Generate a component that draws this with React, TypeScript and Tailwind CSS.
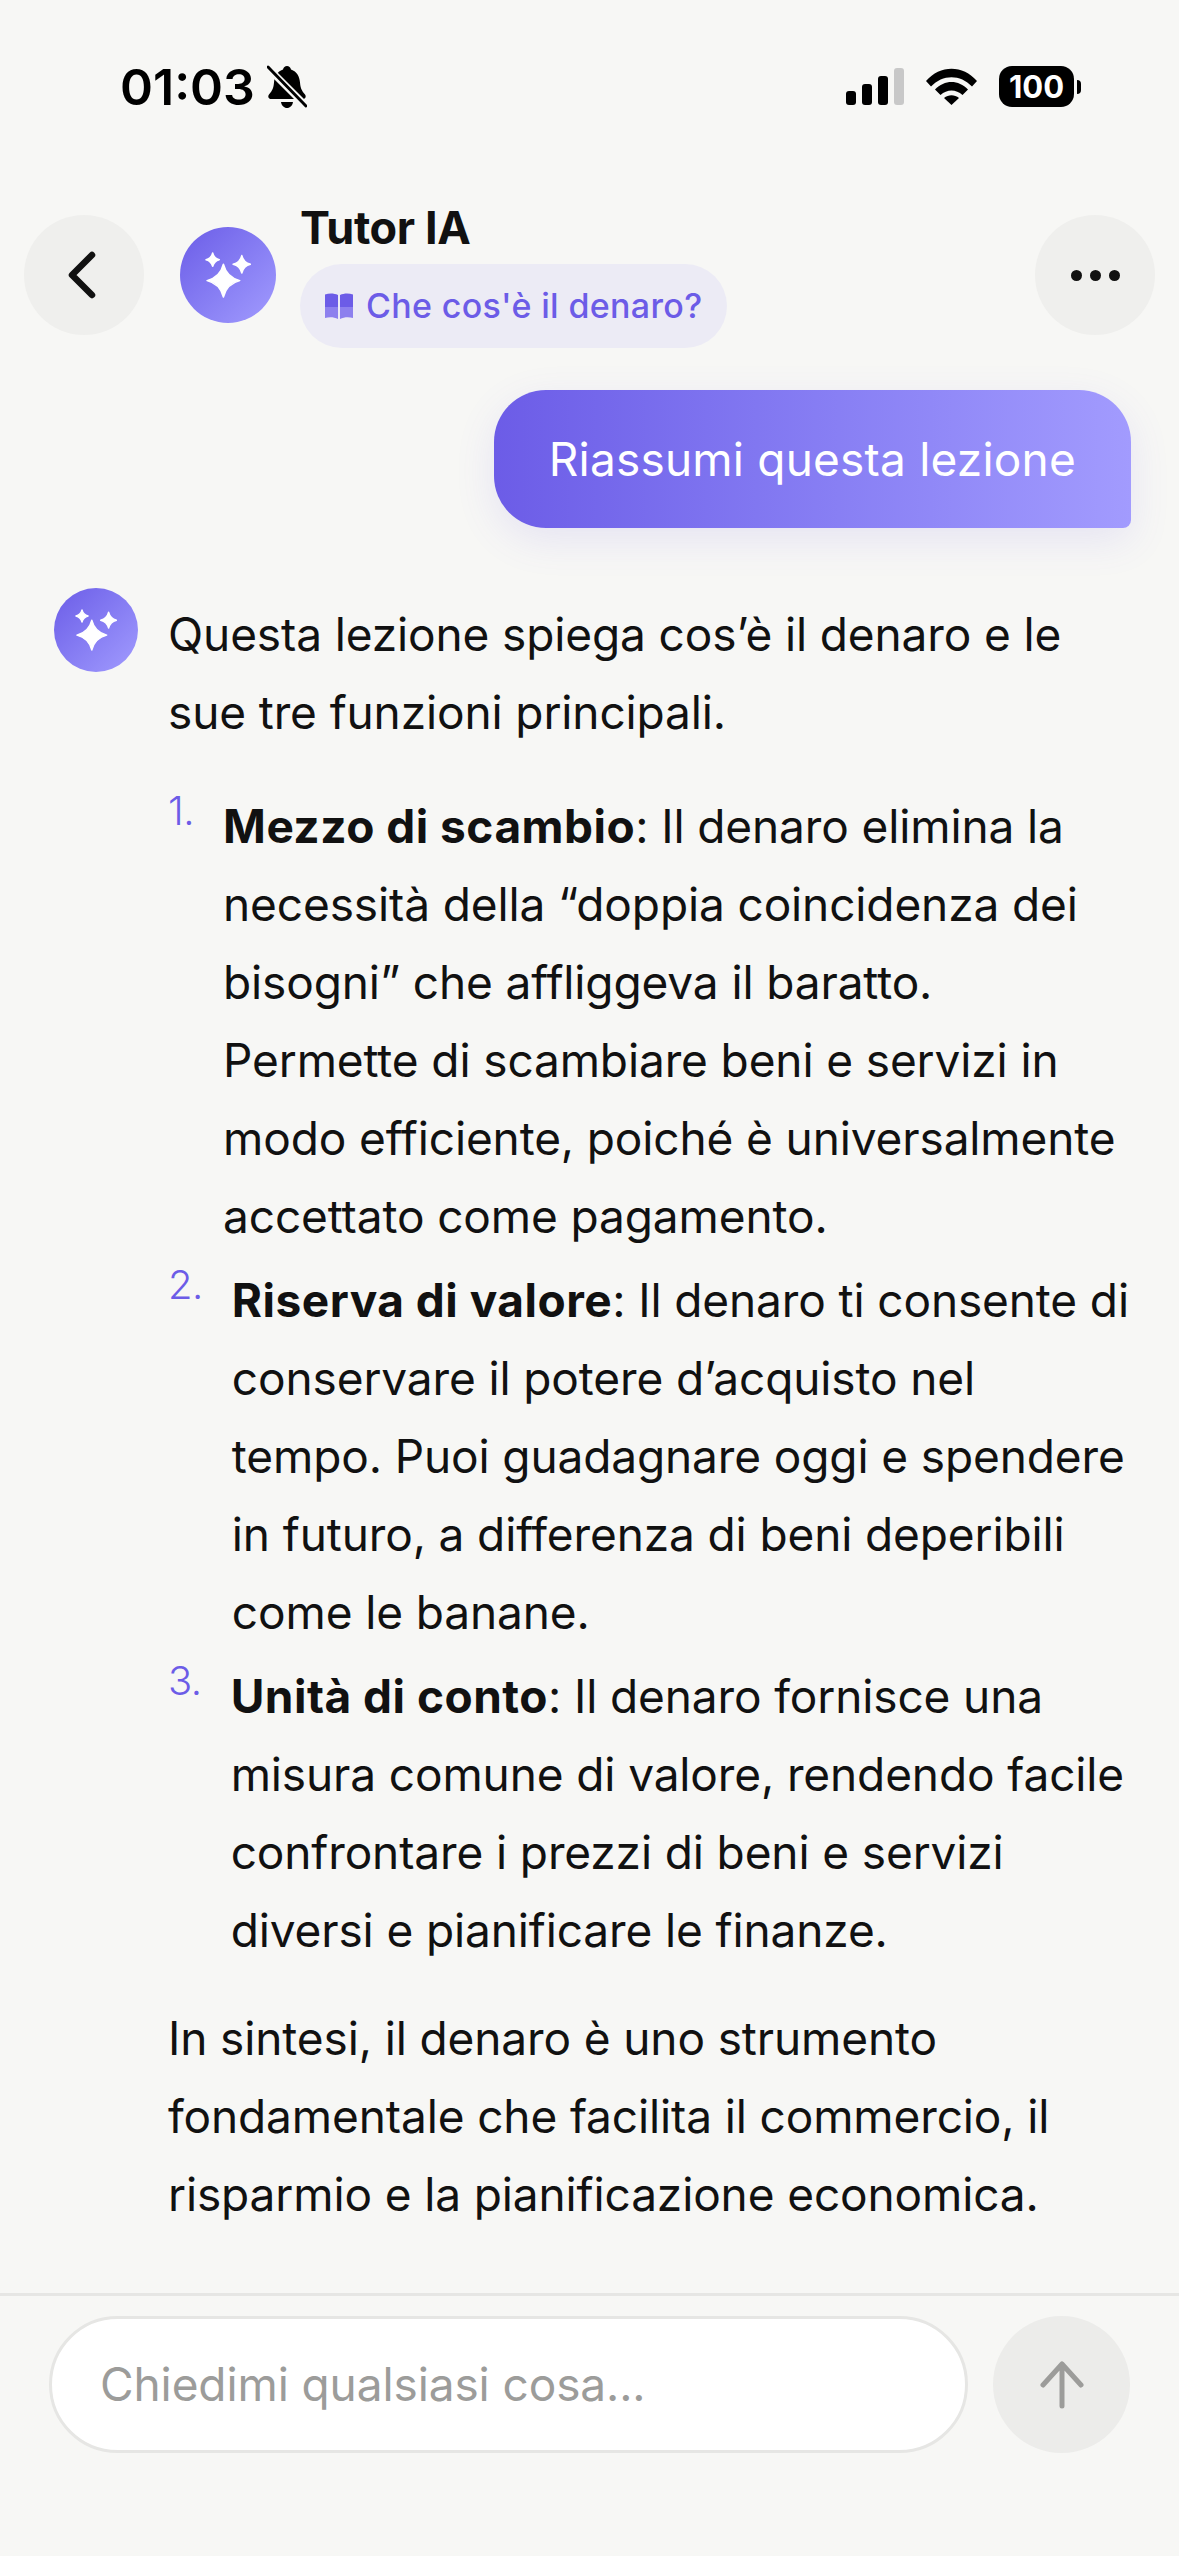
import React from 'react';

// four-point star with slightly rounded tips
const star = (cx: number, cy: number, r: number) => {
  const k = r * 0.2;
  return `M${cx} ${cy - r}Q${cx + k} ${cy - k} ${cx + r} ${cy}Q${cx + k} ${cy + k} ${cx} ${cy + r}Q${cx - k} ${cy + k} ${cx - r} ${cy}Q${cx - k} ${cy - k} ${cx} ${cy - r}Z`;
};

const Sparkles = ({ size }: { size: number }) => (
  <svg width={size} height={size} viewBox="0 0 45 45" fill="#fff" stroke="#fff" strokeWidth="1.5" strokeLinejoin="round">
    <path d={star(18, 28, 16)} />
    <path d={star(36, 12, 8.5)} />
    <path d={star(7.5, 7.5, 6.5)} />
  </svg>
);

const StatusBar = () => (
  <div className="flex justify-between pl-[120px] pr-[98px] pt-[62px] h-[202px] items-start">
    <div className="flex items-center gap-[12px]">
      <span className="text-[50px] leading-[50px] font-semibold text-black">01:03</span>
      <svg width="40" height="44" viewBox="0 0 40 44">
        <path d="M20 1c2 0 3.500 1.500 4 3.500 6 2 8.500 7 9 13 .4 5 1.500 8 5 12 1.500 2 .5 4.500-2 4.500H4c-2.500 0-3.500-2.500-2-4.500 3.500-4 4.600-7 5-12 .5-6 3-11 9-13 .5-2 2-3.500 4-3.500z" fill="#000" />
        <path d="M14 37h12c-.5 3.500-3 6-6 6s-5.500-2.500-6-6z" fill="#000" />
        <path d="M1 3l38 38" stroke="#f7f7f5" strokeWidth="7" />
        <path d="M1 2l38 39" stroke="#000" strokeWidth="3" strokeLinecap="round" />
      </svg>
    </div>
    <div className="flex items-center mt-[4px]">
      <div className="flex items-end gap-[6px] h-[37px]">
        <div className="w-[10px] h-[14px] rounded-[3px] bg-black" />
        <div className="w-[10px] h-[21px] rounded-[3px] bg-black" />
        <div className="w-[10px] h-[29px] rounded-[3px] bg-black" />
        <div className="w-[10px] h-[37px] rounded-[3px] bg-[#c8c8c8]" />
      </div>
      <svg className="ml-[22px]" width="51" height="37" viewBox="0 0 51 37">
        <path d="M0 13C14-3.500 37-3.500 51 13l-5 5.500C34.500 6 16.500 6 5 18.500z" fill="#000" />
        <path d="M9 21.500c9.500-10 23.500-10 33 0l-5.500 5.500c-6.500-6-15.500-6-22 0z" fill="#000" />
        <path d="M18 30c4.500-3.700 10.500-3.700 15 0l-7.500 7z" fill="#000" />
      </svg>
      <div className="ml-[22px] flex items-center">
        <div className="w-[75px] h-[41px] rounded-[13px] bg-black flex items-center justify-center text-white text-[31px] leading-none font-bold">100</div>
        <div className="ml-[3px] w-[4px] h-[14px] rounded-r-full bg-black" />
      </div>
    </div>
  </div>
);

const Header = () => (
  <div className="flex items-center justify-between pl-[24px] pr-[24px] h-[146px]">
    <div className="flex items-center">
      <button className="w-[120px] h-[120px] rounded-full bg-[#efefed] flex items-center justify-center">
        <svg width="36" height="56" viewBox="0 0 36 56" fill="none" className="-ml-[6px]">
          <path d="M29 8L9 28l20 20" stroke="#111" strokeWidth="6.500" strokeLinecap="round" strokeLinejoin="round" />
        </svg>
      </button>
      <div className="ml-[36px] w-[96px] h-[96px] rounded-full bg-gradient-to-br from-[#6c5ce7] to-[#a29bfe] flex items-center justify-center">
        <Sparkles size={46} />
      </div>
      <div className="ml-[24px] flex flex-col items-start">
        <div className="text-[45px] leading-[52px] font-bold text-[#111] tracking-[-0.4px]">Tutor IA</div>
        <div className="mt-[10px] h-[84px] rounded-full bg-[#ecebf5] pl-[25px] pr-[25px] flex items-center gap-[13px]">
          <svg width="28" height="26" viewBox="0 0 28 26">
            <path d="M0 1.500c4-1.500 9-1.500 13 .5v12H0z" fill="#6c5ce7" />
            <path d="M28 1.500c-4-1.500-9-1.500-13 .5v12h13z" fill="#6c5ce7" />
            <path d="M0 14h13v12c-4-2-9-2-13-1z" fill="#8d80ee" />
            <path d="M28 14H15v12c4-2 9-2 13-1z" fill="#8d80ee" />
          </svg>
          <span className="text-[34px] leading-none font-medium tracking-[0.33px] text-[#6c5ce7]">Che cos'è il denaro?</span>
        </div>
      </div>
    </div>
    <button className="w-[120px] h-[120px] rounded-full bg-[#efefed] flex items-center justify-center gap-[8px]">
      <span className="w-[11px] h-[11px] rounded-full bg-[#111]" />
      <span className="w-[11px] h-[11px] rounded-full bg-[#111]" />
      <span className="w-[11px] h-[11px] rounded-full bg-[#111]" />
    </button>
  </div>
);

const items = [
  {
    n: '1.',
    title: 'Mezzo di scambio',
    text: ': Il denaro elimina la necessità della “doppia coincidenza dei bisogni” che affliggeva il baratto. Permette di scambiare beni e servizi in modo efficiente, poiché è universalmente accettato come pagamento.',
  },
  {
    n: '2.',
    title: 'Riserva di valore',
    text: ': Il denaro ti consente di conservare il potere d’acquisto nel tempo. Puoi guadagnare oggi e spendere in futuro, a differenza di beni deperibili come le banane.',
  },
  {
    n: '3.',
    title: 'Unità di conto',
    text: ': Il denaro fornisce una misura comune di valore, rendendo facile confrontare i prezzi di beni e servizi diversi e pianificare le finanze.',
  },
];

const App = () => {
  return (
    <div className="w-[1179px] h-[2556px] bg-[#f7f7f5] flex flex-col overflow-hidden font-['Inter',sans-serif] text-[#111]">
      <StatusBar />
      <Header />

      <main className="flex-1 overflow-hidden">
        <div className="flex justify-end pr-[48px] mt-[42px]">
          <div className="h-[138px] px-[55px] flex items-center rounded-[52px] rounded-br-[8px] bg-gradient-to-r from-[#6c5ce7] to-[#a29bfe] text-white text-[46px] tracking-[0.2px] shadow-[0_12px_40px_rgba(108,92,231,0.12)]">
            Riassumi questa lezione
          </div>
        </div>

        <div className="flex mt-[60px] pl-[54px] pr-[44px]">
          <div className="w-[84px] h-[84px] rounded-full shrink-0 bg-gradient-to-br from-[#6c5ce7] to-[#a29bfe] flex items-center justify-center">
            <Sparkles size={42} />
          </div>
          <div className="ml-[30px] text-[46px] leading-[78px] tracking-[-0.12px] mt-[7px]">
            <p>Questa lezione spiega cos’è il denaro e le sue tre funzioni principali.</p>
            <ol className="mt-[36px] flex flex-col gap-[6px]">
              {items.map((item) => (
                <li key={item.n} className="flex">
                  <span className="text-[40px] leading-[48px] font-light tracking-[-0.5px] text-[#6c5ce7] shrink-0 mr-[29px]">{item.n}</span>
                  <div>
                    <strong className="font-bold tracking-[0.5px]">{item.title}</strong>
                    {item.text}
                  </div>
                </li>
              ))}
            </ol>
            <p className="mt-[30px]">In sintesi, il denaro è uno strumento fondamentale che facilita il commercio, il risparmio e la pianificazione economica.</p>
          </div>
        </div>
      </main>

      <footer className="h-[263px] border-t-[3px] border-[#e6e6e4] pt-[20px] pl-[49px] pr-[49px] flex gap-[25px]">
        <div className="flex-1 h-[137px] rounded-full bg-white border-[3px] border-[#e6e6e4] pl-[48px] flex items-center text-[46px] tracking-[-0.1px] text-[#9c9c9a]">
          Chiedimi qualsiasi cosa...
        </div>
        <button className="w-[137px] h-[137px] rounded-full bg-[#ececea] flex items-center justify-center">
          <svg width="44" height="48" viewBox="0 0 44 48" fill="none">
            <path d="M22 45V3M3 24L22 3l19 21" stroke="#9c9c9a" strokeWidth="5" strokeLinecap="round" strokeLinejoin="round" />
          </svg>
        </button>
      </footer>
    </div>
  );
};

export default App;
